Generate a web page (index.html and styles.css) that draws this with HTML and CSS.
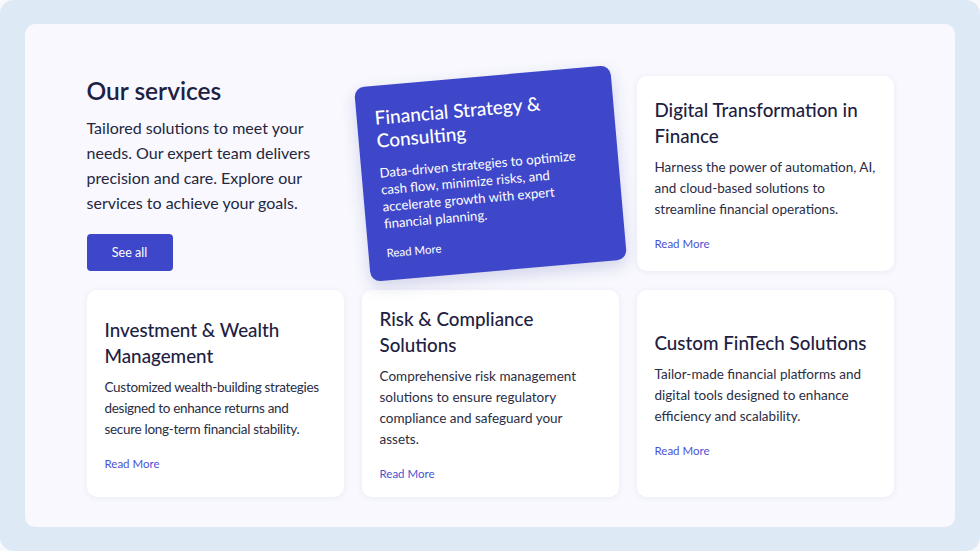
FILE: index.html
```html
<!DOCTYPE html>
<html lang="en">
<head>
<meta charset="utf-8">
<title>Our services</title>
<link rel="stylesheet" href="styles.css">
</head>
<body>
<div class="frame">
  <section class="panel">
    <div class="grid">
      <div class="intro">
        <h1 class="intro-title">Our services</h1>
        <p class="intro-text">Tailored solutions to meet your needs. Our expert team delivers precision and care. Explore our services to achieve your goals.</p>
        <a class="btn" href="#">See all</a>
      </div>
      <article class="card card-featured">
        <h2 class="card-title">Financial Strategy &amp; Consulting</h2>
        <p class="card-text">Data-driven strategies to optimize cash flow, minimize risks, and accelerate growth with expert financial planning.</p>
        <a class="card-link" href="#">Read More</a>
      </article>
      <article class="card">
        <h2 class="card-title">Digital Transformation in Finance</h2>
        <p class="card-text">Harness the power of automation, AI, and cloud-based solutions to streamline financial operations.</p>
        <a class="card-link" href="#">Read More</a>
      </article>
      <article class="card">
        <h2 class="card-title">Investment &amp; Wealth Management</h2>
        <p class="card-text card-text-tight">Customized wealth-building strategies designed to enhance returns and secure long-term financial stability.</p>
        <a class="card-link" href="#">Read More</a>
      </article>
      <article class="card">
        <h2 class="card-title">Risk &amp; Compliance Solutions</h2>
        <p class="card-text">Comprehensive risk management solutions to ensure regulatory compliance and safeguard your assets.</p>
        <a class="card-link" href="#">Read More</a>
      </article>
      <article class="card">
        <h2 class="card-title">Custom FinTech Solutions</h2>
        <p class="card-text">Tailor-made financial platforms and digital tools designed to enhance efficiency and scalability.</p>
        <a class="card-link" href="#">Read More</a>
      </article>
    </div>
  </section>
</div>
</body>
</html>
```

FILE: styles.css
```css
* { box-sizing: border-box; }
html, body { margin: 0; padding: 0; background: #f7f9fc; }
body {
  font-family: Lato, "Open Sans", Arial, sans-serif;
  color: #1e2142;
}
.frame {
  width: 980px;
  height: 551px;
  background: #ddeaf5;
  border-radius: 14px;
  padding: 24px 25px;
}
.panel {
  height: 503px;
  background: #f8f8fe;
  border-radius: 10px;
  padding: 52px 0 0;
}
.grid {
  width: 807px;
  margin: 0 auto;
  display: grid;
  grid-template-columns: repeat(3, 257px);
  grid-template-rows: 195px 207px;
  column-gap: 18px;
  row-gap: 19px;
}
.intro {
  display: flex;
  flex-direction: column;
  justify-content: flex-end;
  align-items: flex-start;
}
.intro-title {
  margin: 0;
  font-size: 24.5px;
  line-height: 28px;
  font-weight: 600;
  color: #1e2142;
}
.intro-text {
  margin: 10px 0 0;
  font-size: 16px;
  line-height: 25px;
  color: #24273f;
}
.btn {
  margin-top: 19px;
  display: flex;
  align-items: center;
  justify-content: center;
  width: 86px;
  height: 37px;
  background: #3e47c9;
  color: #fff;
  border-radius: 4px;
  font-size: 12.5px;
  text-decoration: none;
}
.card {
  background: #fff;
  border-radius: 10px;
  box-shadow: 0 1px 6px rgba(40, 50, 110, 0.07);
  padding: 16px 18px 15px;
  display: flex;
  flex-direction: column;
  justify-content: center;
  align-items: flex-start;
}
.card-title {
  margin: 0;
  font-size: 18.8px;
  line-height: 26px;
  font-weight: 500;
  color: #1e2142;
}
.card-text {
  margin: 8px 0 0;
  font-size: 13.5px;
  line-height: 21px;
  color: #2a2d45;
}
.card-text-tight { letter-spacing: -0.3px; }
.card-link {
  margin-top: 16px;
  font-size: 11.5px;
  line-height: 16px;
  color: #4a52d4;
  text-decoration: none;
}
.card-featured {
  background: #3e47c9;
  transform: rotate(-5deg);
  box-shadow: 0 6px 16px rgba(40, 50, 140, 0.18);
  padding: 20px 18px;
}
.card-featured .card-title,
.card-featured .card-text,
.card-featured .card-link { color: #fff; }
.card-featured .card-title { font-size: 19px; line-height: 23.5px; }
.card-featured .card-text { font-size: 13.2px; line-height: 17px; margin-top: 12px; }
.card-featured .card-link { margin-top: 13px; }
```
